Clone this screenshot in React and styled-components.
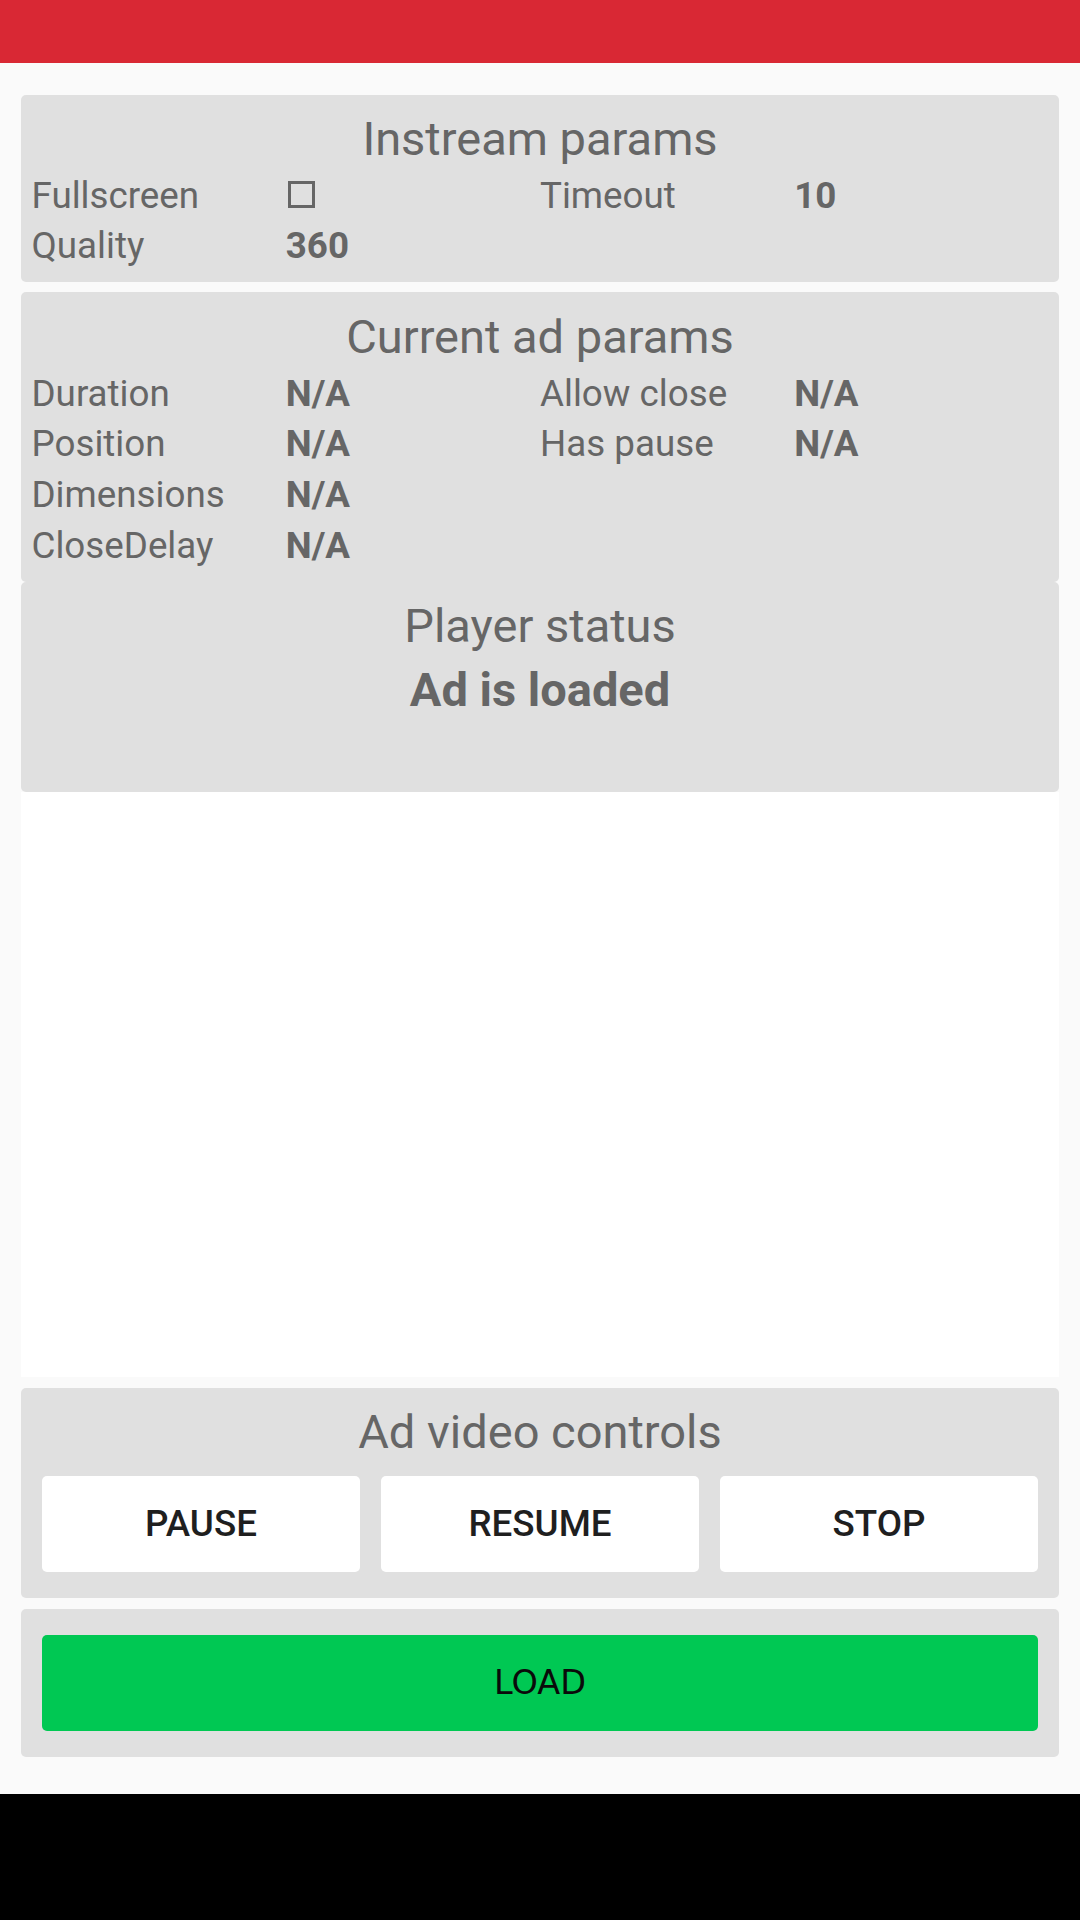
import styled, { createGlobalStyle } from 'styled-components';

const GlobalStyle = createGlobalStyle`
  html, body {
    margin: 0;
    padding: 0;
    background: #000;
  }
  #root {
    height: 1920px;
  }
  * {
    box-sizing: border-box;
  }
`;

const Screen = styled.div`
  height: 1920px;
  display: flex;
  flex-direction: column;
  font-family: Roboto, "Liberation Sans", sans-serif;
  color: #666666;
`;

const StatusBar = styled.div`
  height: 63px;
  flex-shrink: 0;
  background: #d92834;
`;

const Content = styled.main`
  flex: 1;
  display: flex;
  flex-direction: column;
  background: #fafafa;
  padding: 31.5px 21px 37px;
`;

const NavBar = styled.div`
  height: 126px;
  flex-shrink: 0;
  background: #000;
`;

const Panel = styled.section`
  background: #e0e0e0;
  border-radius: 5px;
  padding: 10.5px;
  margin-top: ${props => (props.$spaced ? '10.5px' : '0')};
  height: ${props => props.$height || 'auto'};
  flex-shrink: 0;
`;

const PanelTitle = styled.h2`
  margin: 6px 0 0;
  font-size: 47px;
  font-weight: 400;
  line-height: 56px;
  text-align: center;
  color: #666666;
`;

const StatusText = styled.div`
  font-size: 47px;
  font-weight: 700;
  line-height: 71px;
  text-align: center;
  color: #666666;
`;

const ParamGrid = styled.div`
  display: grid;
  grid-template-columns: repeat(4, 1fr);
  grid-auto-rows: ${props => props.$row || '50px'};
  margin-top: 4px;
  font-size: 36.75px;
  line-height: ${props => props.$row || '50px'};
`;

const Label = styled.span`
  font-weight: 400;
  white-space: nowrap;
`;

const Value = styled.span`
  font-weight: 700;
`;

const CheckBox = styled.span`
  display: inline-block;
  width: 27px;
  height: 27px;
  margin-left: 2.5px;
  border: 3px solid #666666;
  vertical-align: baseline;
`;

const VideoArea = styled.div`
  flex: 1;
  background: #ffffff;
`;

const ButtonRow = styled.div`
  display: grid;
  grid-template-columns: repeat(${props => props.$cols || 1}, 1fr);
`;

const Button = styled.button`
  margin: 16px 10.5px;
  height: 95.5px;
  border: none;
  border-radius: 5px;
  background: ${props => props.$bg || '#ffffff'};
  color: ${props => props.$color || '#1f1f1f'};
  font-family: ${props => props.$font || 'Roboto, "Liberation Sans", sans-serif'};
  font-size: ${props => props.$size || '36.75px'};
  font-weight: ${props => props.$weight || 500};
  text-transform: uppercase;
  padding: 0;
`;

const instreamParams = [
  ['Fullscreen', <CheckBox key="cb" />],
  ['Timeout', '10'],
  ['Quality', '360'],
];

const adParams = [
  ['Duration', 'N/A'],
  ['Allow close', 'N/A'],
  ['Position', 'N/A'],
  ['Has pause', 'N/A'],
  ['Dimensions', 'N/A'],
  null,
  ['CloseDelay', 'N/A'],
  null,
];

function Params({ items, row }) {
  return (
    <ParamGrid $row={row}>
      {items.map((item, i) =>
        item ? (
          [<Label key={`l${i}`}>{item[0]}</Label>, <Value key={`v${i}`}>{item[1]}</Value>]
        ) : (
          [<span key={`e${i}a`} />, <span key={`e${i}b`} />]
        )
      )}
    </ParamGrid>
  );
}

export default function App() {
  return (
    <>
      <GlobalStyle />
      <Screen>
        <StatusBar />
        <Content>
          <Panel>
            <PanelTitle>Instream params</PanelTitle>
            <Params items={instreamParams} />
          </Panel>

          <Panel $spaced>
            <PanelTitle>Current ad params</PanelTitle>
            <Params items={adParams} row="50.7px" />
          </Panel>

          <Panel $height="210.5px">
            <PanelTitle>Player status</PanelTitle>
            <StatusText>Ad is loaded</StatusText>
          </Panel>

          <VideoArea />

          <Panel $spaced>
            <PanelTitle>Ad video controls</PanelTitle>
            <ButtonRow $cols={3}>
              <Button>Pause</Button>
              <Button>Resume</Button>
              <Button>Stop</Button>
            </ButtonRow>
          </Panel>

          <Panel $spaced>
            <ButtonRow>
              <Button
                $bg="#00c853"
                $color="#0a0a0a"
                $font='"DejaVu Sans", "Noto Sans", sans-serif'
                $size="33.5px"
                $weight={400}
              >
                Load
              </Button>
            </ButtonRow>
          </Panel>
        </Content>
        <NavBar />
      </Screen>
    </>
  );
}
